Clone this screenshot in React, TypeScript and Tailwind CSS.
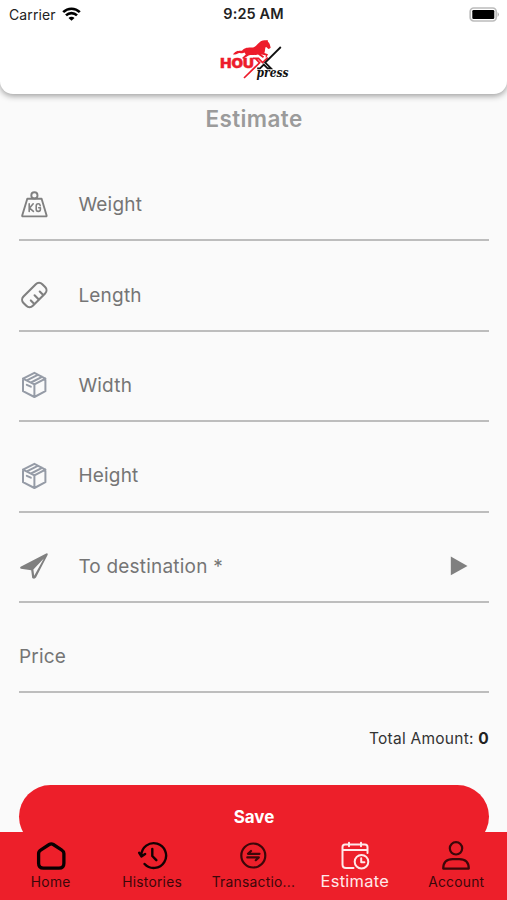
import type { ReactNode } from "react";

const line = {
  fill: "none",
  strokeLinecap: "round" as const,
  strokeLinejoin: "round" as const,
};

function WeightIcon() {
  return (
    <svg className="size-[30px]" viewBox="0 0 30 30" {...line} stroke="#808080" strokeWidth="1.9">
      <circle cx="15.4" cy="5.4" r="3.1" />
      <path d="M8.3 8.7H22.6L27.6 25.6Q27.8 26.4 27 26.4H3.8Q3 26.4 3.2 25.6Z" />
      <path d="M10.2 13.8v7.6M14.2 13.8l-3.6 4.3 3.8 3.3M21.2 15.6q-.3-1.8-1.9-1.8-2.1 0-2.1 2.2v3.2q0 2.2 2.1 2.2 2.1 0 2.1-2.2v-1.4h-1.7" strokeWidth="1.6" />
    </svg>
  );
}

function RulerIcon() {
  return (
    <svg className="size-[30px]" viewBox="0 0 30 30" {...line} stroke="#808080" strokeWidth="2.1">
      <g transform="rotate(-45 15.3 15)">
        <rect x="2" y="8.4" width="26.6" height="13.2" rx="4.6" />
        <path d="M9 21v-4.6M15.3 21v-5.6M21.6 21v-4.6" />
      </g>
    </svg>
  );
}

function BoxIcon() {
  return (
    <svg className="size-[30px]" viewBox="0 0 30 30" {...line} stroke="#959ba6" strokeWidth="2">
      <path d="M15.4 2.8 26.4 8.6v12.6L15.4 27 4 21.2V8.6ZM4 8.6l11.4 5.8L26.4 8.6M15.4 14.4v12.4M7.8 10.4 18.8 4.8M12 12.5 23 6.9M7.8 14.8l4 1.9" />
    </svg>
  );
}

function SendIcon() {
  return (
    <svg className="size-[30px]" viewBox="0 0 30 30">
      <path d="M1.6 15.7 27.2 2.4Q29.2 1.8 28.7 3.8L17 26.6Q15.4 28.6 13.2 27L12.2 19.2 2 17.7Q.2 17 1.6 15.7ZM24.8 7.4 14.4 18.5l.8 6.2Z" fill="#808080" fillRule="evenodd" />
    </svg>
  );
}

function Logo() {
  return (
    <svg className="h-[48px] w-[76px]" viewBox="218 36 76 48">
      <path d="M233 54.5C235 50.5 239 50.5 242 50.7C245 47.3 248 47.8 252 47.6C256 47.3 257.7 43.2 260.8 41.2C263.4 39.8 266 40.6 267.6 40L268 41.8C269.8 43 270.2 46 270.7 47.8L268.9 49.1C267.7 48.7 267.1 47.2 265.7 47C264.8 49 265.2 51.2 264.4 52.9L268 54.3L266.4 57.6L265.4 57.3L266 55.5L260.9 54.2L264.1 56.6L263 58L258 54.4C254.5 55.4 251 54.6 248.6 55.5L243.2 58.8L242 58L245.8 54.6L244.5 52.6C241.6 54.2 240.5 52.2 238.4 53.2C236.7 54.3 235.2 54.6 233 54.5Z" fill="#ed1c2b" />
      <text x="220.3" y="68" fontSize="12.5" fontWeight="900" textLength="33.5" lengthAdjust="spacingAndGlyphs" fill="#ed1c2b" stroke="#ed1c2b" strokeWidth=".35" className="font-[Inter,sans-serif]">HOU</text>
      <path d="M253 58.3h5.4l4.2 4.3 5.2-5M244 78 259.6 62.8 255.4 58.3" fill="none" stroke="#ed1c2b" strokeWidth="1.7" />
      <path d="M280.8 47 265.2 62.6 271 68.4H267.6L263.8 64.6 260 68.4H257.2" fill="none" stroke="#111" strokeWidth="1.8" />
      <text x="256.5" y="76.8" fontSize="13" fontWeight="700" fontStyle="italic" textLength="32" lengthAdjust="spacingAndGlyphs" fill="#111" className="font-['DejaVu_Serif',serif]">press</text>
    </svg>
  );
}

function Field({ label, icon, arrow }: { label: string; icon?: ReactNode; arrow?: boolean }) {
  return (
    <div className="flex h-[90.4px] items-center border-b-2 border-[#bdbdbd] pt-[19px] text-[19px] tracking-[0.2px] text-[#757575]">
      {icon && <span className="w-[59.4px] shrink-0">{icon}</span>}
      <span className="grow pt-[1.5px]">{label}</span>
      {arrow && (
        <svg className="mr-[21px] h-[20px] w-[18px]" viewBox="0 0 18 20">
          <path d="M.8 .5 17.5 10 .8 19.3Z" fill="#808080" />
        </svg>
      )}
    </div>
  );
}

function Tab({ label, active, children }: { label: string; active?: boolean; children: ReactNode }) {
  return (
    <div className={"flex w-1/5 flex-col items-center pt-2 " + (active ? "text-[#ffe9ea]" : "text-[#3c0709]")}>
      <svg className="size-8 shrink-0" viewBox="0 0 32 32" {...line} stroke="currentColor" strokeWidth="2.2">
        {children}
      </svg>
      <span className={active ? "text-[16.4px] leading-[18px] tracking-[0.3px]" : "text-[13.8px] leading-5 tracking-[0.25px]"}>{label}</span>
    </div>
  );
}

export default function App() {
  return (
    <div className="flex h-[900px] w-[507px] flex-col overflow-hidden bg-[#fafafa] font-[Inter,'Liberation_Sans',sans-serif]">
      <header className="z-10 h-[94px] shrink-0 rounded-b-[13px] bg-white shadow-[0_2px_6px_rgba(0,0,0,0.38)]">
        <div className="grid h-7 grid-cols-3 items-center pr-[7px] pl-[9px] text-[14px] text-[#222]">
          <div className="flex items-center gap-[6px]">
            <span className="tracking-[0.1px]">Carrier</span>
            <svg className="h-[14px] w-[19px]" viewBox="0 0 19 14" fill="none" stroke="#000" strokeWidth="2.6">
              <path d="M1.2 5.2a11.8 11.8 0 0 1 16.6 0M4 8.4a7.8 7.8 0 0 1 11 0" />
              <path d="M9.5 13.8 6.5 10.9a4.2 4.2 0 0 1 6 0Z" fill="#000" stroke="none" />
            </svg>
          </div>
          <span className="-translate-x-[1px] text-center text-[14.5px] font-semibold tracking-[0.1px] whitespace-nowrap">9:25 AM</span>
          <svg className="h-[15px] w-[31px] justify-self-end" viewBox="0 0 31 15">
            <rect x="1.2" y="1" width="26" height="13" rx="3.5" fill="white" stroke="#bcbcbc" strokeWidth="1.7" />
            <rect x="3.3" y="3" width="22" height="9" rx="1.2" />
            <path d="M28.6 5Q31.2 7.5 28.6 10Z" fill="#aaa" />
          </svg>
        </div>
        <div className="flex justify-center pt-2 pl-[5px]">
          <Logo />
        </div>
      </header>
      <main className="flex h-[738px] shrink-0 flex-col overflow-hidden pr-[18px] pl-[19px]">
        <h1 className="h-[57px] shrink-0 pt-[9px] text-center text-[22.5px] leading-8 font-semibold tracking-[0.4px] text-[#9b9b9b]">Estimate</h1>
        <div className="shrink-0">
          <Field label="Weight" icon={<WeightIcon />} />
          <Field label="Length" icon={<RulerIcon />} />
          <Field label="Width" icon={<BoxIcon />} />
          <Field label="Height" icon={<BoxIcon />} />
          <Field label="To destination *" icon={<SendIcon />} arrow />
          <Field label="Price" />
        </div>
        <p className="h-[92px] shrink-0 pt-[34px] text-right text-[15.5px] leading-6 tracking-[0.25px] text-[#333]">
          Total Amount: <b className="font-bold text-[#222]">0</b>
        </p>
        <button className="h-[63px] shrink-0 rounded-full bg-[#ed1f2a] pt-px text-[17px] font-bold text-white">Save</button>
      </main>
      <nav className="z-10 flex h-[68px] shrink-0 bg-[#ed1f2a]">
        <Tab label="Home">
          <path d="M6 9.8Q3.6 11.3 3.6 13.5v9.8q0 4.9 4.9 4.9h15.5q4.9 0 4.9-4.9v-9.8q0-2.2-2.4-3.7L18.3 4.5q-2-1.3-4.1 0Z" stroke="#090001" strokeWidth="3.3" />
        </Tab>
        <Tab label="Histories">
          <g stroke="#120102" strokeWidth="2.4"><path d="M5.3 15.5A12.4 12.4 0 1 1 8.6 24M3.2 12.8l2.2 3.6 3.7-2.5M16.3 9v7l4 4.2" /></g>
        </Tab>
        <Tab label="Transactio...">
          <circle cx="16.3" cy="15.5" r="12" />
          <path d="M22.5 13.8H11l3-2.8M10.3 17.4h11.5l-3 2.8" />
        </Tab>
        <Tab label="Estimate" active>
          <path d="M14.5 28H7q-3.5 0-3.5-3.5V7Q3.5 4.5 6 4.5h20q2.5 0 2.5 2.5v6M3.5 9.9h25M10 2.8v3.5M22 2.8v3.5" strokeWidth="2" />
          <circle cx="22.5" cy="21.7" r="6.8" strokeWidth="2" />
          <path d="M22.2 18.2v4h3.2" strokeWidth="2" />
        </Tab>
        <Tab label="Account">
          <circle cx="16" cy="8.3" r="6.2" />
          <path d="M3.2 28.6q0-9.5 9.5-9.5h6.6q9.5 0 9.5 9.5Z" />
        </Tab>
      </nav>
    </div>
  );
}
